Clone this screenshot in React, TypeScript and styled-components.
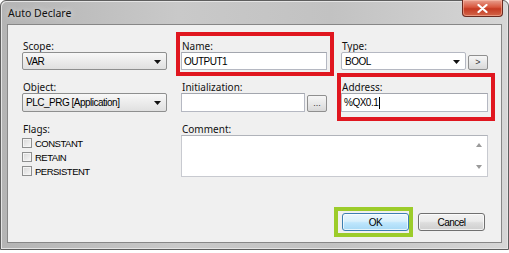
import React from "react";
import styled, { createGlobalStyle } from "styled-components";

const GlobalStyle = createGlobalStyle`
  html, body { margin: 0; padding: 0; background: #ffffff; }
  * { box-sizing: border-box; }
`;

const Window = styled.div`
  width: 509px;
  height: 250px;
  border: 1px solid #5e5e5e;
  border-radius: 6px 6px 0 0;
  background: linear-gradient(90deg, #b4b4b4 0%, #c9c9c9 35%, #c2c2c2 65%, #d6d6d6 100%);
  padding: 0 6px 6px 6px;
  display: flex;
  flex-direction: column;
  box-shadow: inset 1px 1px 0 #e4e4e4, inset -1px -1px 0 #e4e4e4;
`;

const TitleBar = styled.div`
  height: 23px;
  display: flex;
  align-items: flex-start;
  justify-content: space-between;
`;

const Title = styled.span`
  margin: 5px 0 0 1px;
  font-family: "Noto Sans", "Open Sans", sans-serif;
  font-size: 10.5px;
  line-height: 14px;
  color: #111;
  text-shadow: 0 0 6px rgba(255, 255, 255, 0.8);
`;

const CloseButton = styled.div`
  width: 41px;
  height: 17px;
  margin: -1px -1px 0 0;
  border: 1px solid #6b2a20;
  border-top: none;
  border-radius: 0 0 4px 4px;
  background: linear-gradient(180deg, #e8a090 0%, #d8573e 45%, #c53a22 55%, #d2664a 100%);
  box-shadow: inset 0 0 0 1px rgba(255, 200, 180, 0.5);
  display: flex;
  align-items: center;
  justify-content: center;
`;

const Client = styled.div`
  flex: 1;
  background: #f0f0f0;
  border: 1px solid #878787;
  padding: 15px 14px 11px 14px;
  display: flex;
  flex-direction: column;
`;

const Grid = styled.div`
  display: grid;
  grid-template-columns: 145px 146px 147px;
  grid-template-rows: 30px 31px auto;
  row-gap: 11px;
  column-gap: 14px;
`;

const Field = styled.div<{ $span?: boolean }>`
  position: relative;
  display: flex;
  flex-direction: column;
  min-width: 0;
  grid-column: ${(p) => (p.$span ? "2 / 4" : "auto")};
`;

const Highlight = styled.div<{ $t: number; $r: number; $b: number; $l: number; $c: string; $w: number }>`
  position: absolute;
  top: ${(p) => p.$t}px;
  right: ${(p) => p.$r}px;
  bottom: ${(p) => p.$b}px;
  left: ${(p) => p.$l}px;
  border: ${(p) => p.$w}px solid ${(p) => p.$c};
  pointer-events: none;
`;

const Label = styled.div`
  font-family: "Noto Sans", "Open Sans", sans-serif;
  font-size: 10px;
  line-height: 12px;
  height: 12px;
  color: #111;
  padding-left: 1px;
`;

const Row = styled.div`
  display: flex;
  align-items: flex-end;
  gap: 2px;
`;

const Combo = styled.div<{ $editable?: boolean }>`
  position: relative;
  flex: 1;
  height: 18px;
  border: 1px solid ${(p) => (p.$editable ? "#b5b8c2" : "#8e8f8f")};
  border-radius: 2px;
  background: ${(p) =>
    p.$editable ? "#ffffff" : "linear-gradient(180deg, #f8f8f8 0%, #ececec 50%, #e0e0e0 100%)"};
  display: flex;
  align-items: center;
  padding: 0 14px 0 3px;
  font-family: "Liberation Sans", Arial, sans-serif;
  font-size: 10px;
  letter-spacing: -0.5px;
  color: #000;
  white-space: nowrap;
`;

const Arrow = styled.svg`
  position: absolute;
  right: 5px;
  top: 7px;
`;

const TextInput = styled.div<{ $h?: number }>`
  flex: 1;
  height: ${(p) => p.$h ?? 18}px;
  border: 1px solid #b5b8c2;
  border-top-color: #a3a6ae;
  background: #ffffff;
  display: flex;
  align-items: center;
  padding: 0 2px;
  font-family: "Liberation Sans", Arial, sans-serif;
  font-size: 10px;
  letter-spacing: -0.5px;
  color: #000;
  white-space: nowrap;
`;

const Caret = styled.span`
  display: inline-block;
  width: 1px;
  height: 12px;
  background: #000;
  margin-left: 1px;
`;

const SmallButton = styled.div<{ $h: number }>`
  width: 20px;
  height: ${(p) => p.$h}px;
  border: 1px solid #8f8f8f;
  border-radius: 2px;
  background: linear-gradient(180deg, #f6f6f6 0%, #e8e8e8 50%, #d8d8d8 100%);
  display: flex;
  align-items: center;
  justify-content: center;
  font-family: "Liberation Sans", Arial, sans-serif;
  font-size: 9px;
  color: #333;
  line-height: 1;
`;

const FlagList = styled.div`
  display: flex;
  flex-direction: column;
  padding-top: 1px;
`;

const FlagRow = styled.div`
  height: 14px;
  display: flex;
  align-items: center;
  gap: 3px;
  font-family: "Liberation Sans", Arial, sans-serif;
  font-size: 9.5px;
  letter-spacing: -0.5px;
  color: #000;
`;

const Check = styled.span`
  width: 10px;
  height: 10px;
  border: 1px solid #8e8f8f;
  background: linear-gradient(135deg, #d7d7d7 0%, #eaeaea 60%, #f8f8f8 100%);
  box-shadow: inset 0 0 0 1px #f4f4f4;
`;

const TextArea = styled.div`
  position: relative;
  height: 42px;
  border: 1px solid #c8cad0;
  border-top-color: #b0b3ba;
  background: #ffffff;
`;

const Scroll = styled.div`
  position: absolute;
  right: 0;
  top: 0;
  bottom: 0;
  width: 16px;
  display: flex;
  flex-direction: column;
  justify-content: space-between;
  align-items: center;
  padding: 7px 0 7px 0;
`;

const Footer = styled.div`
  margin-top: auto;
  display: flex;
  justify-content: flex-end;
  gap: 9px;
  padding-right: 2px;
`;

const Button = styled.div<{ $default?: boolean }>`
  position: relative;
  width: 67px;
  height: 18px;
  border: 1px solid ${(p) => (p.$default ? "#3c7fb1" : "#707070")};
  border-radius: 3px;
  background: ${(p) =>
    p.$default
      ? "linear-gradient(180deg, #eaf6fd 0%, #d9f0fc 45%, #bee6fd 55%, #a7d9f5 100%)"
      : "linear-gradient(180deg, #f2f2f2 0%, #ebebeb 45%, #dddddd 55%, #cfcfcf 100%)"};
  box-shadow: inset 0 0 0 1px rgba(255, 255, 255, 0.7);
  display: flex;
  align-items: center;
  justify-content: center;
  font-family: "Liberation Sans", Arial, sans-serif;
  font-size: 10px;
  letter-spacing: -0.5px;
  color: #000;
`;

const DownArrow = () => (
  <Arrow width="7" height="4" viewBox="0 0 7 4">
    <path d="M0 0 H7 L3.5 4 Z" fill="#111" />
  </Arrow>
);

export default function App() {
  return (
    <>
      <GlobalStyle />
      <Window>
        <TitleBar>
          <Title>Auto Declare</Title>
          <CloseButton>
            <svg width="11" height="9" viewBox="0 0 11 9">
              <path d="M1.5 1 L9.5 8 M9.5 1 L1.5 8" stroke="#ffffff" strokeWidth="2.2" strokeLinecap="round" />
            </svg>
          </CloseButton>
        </TitleBar>
        <Client>
          <Grid>
            <Field>
              <Label>Scope:</Label>
              <Combo>
                VAR
                <DownArrow />
              </Combo>
            </Field>
            <Field>
              <Highlight $t={-8} $r={-7} $b={-6} $l={-5} $c="#e0161f" $w={4} />
              <Label>Name:</Label>
              <TextInput>OUTPUT1</TextInput>
            </Field>
            <Field>
              <Label>Type:</Label>
              <Row>
                <Combo $editable>
                  BOOL
                  <DownArrow />
                </Combo>
                <SmallButton $h={15}>&gt;</SmallButton>
              </Row>
            </Field>

            <Field>
              <Label>Object:</Label>
              <Combo>
                PLC_PRG [Application]
                <DownArrow />
              </Combo>
            </Field>
            <Field>
              <Label>Initialization:</Label>
              <Row>
                <TextInput $h={19} />
                <SmallButton $h={17}>...</SmallButton>
              </Row>
            </Field>
            <Field>
              <Highlight $t={-8} $r={-7} $b={-9} $l={-4} $c="#e0161f" $w={4} />
              <Label>Address:</Label>
              <TextInput $h={19}>
                %QX0.1
                <Caret />
              </TextInput>
            </Field>

            <Field>
              <Label>Flags:</Label>
              <FlagList>
                <FlagRow>
                  <Check />
                  CONSTANT
                </FlagRow>
                <FlagRow>
                  <Check />
                  RETAIN
                </FlagRow>
                <FlagRow>
                  <Check />
                  PERSISTENT
                </FlagRow>
              </FlagList>
            </Field>
            <Field $span>
              <Label>Comment:</Label>
              <TextArea>
                <Scroll>
                  <svg width="6" height="4" viewBox="0 0 6 4">
                    <path d="M0 4 L3 0 L6 4 Z" fill="#9a9a9a" />
                  </svg>
                  <svg width="6" height="4" viewBox="0 0 6 4">
                    <path d="M0 0 L3 4 L6 0 Z" fill="#9a9a9a" />
                  </svg>
                </Scroll>
              </TextArea>
            </Field>
          </Grid>
          <Footer>
            <Button $default>
              <Highlight $t={-7} $r={-5} $b={-7} $l={-9} $c="#9ccc2a" $w={4} />
              OK
            </Button>
            <Button>Cancel</Button>
          </Footer>
        </Client>
      </Window>
    </>
  );
}
